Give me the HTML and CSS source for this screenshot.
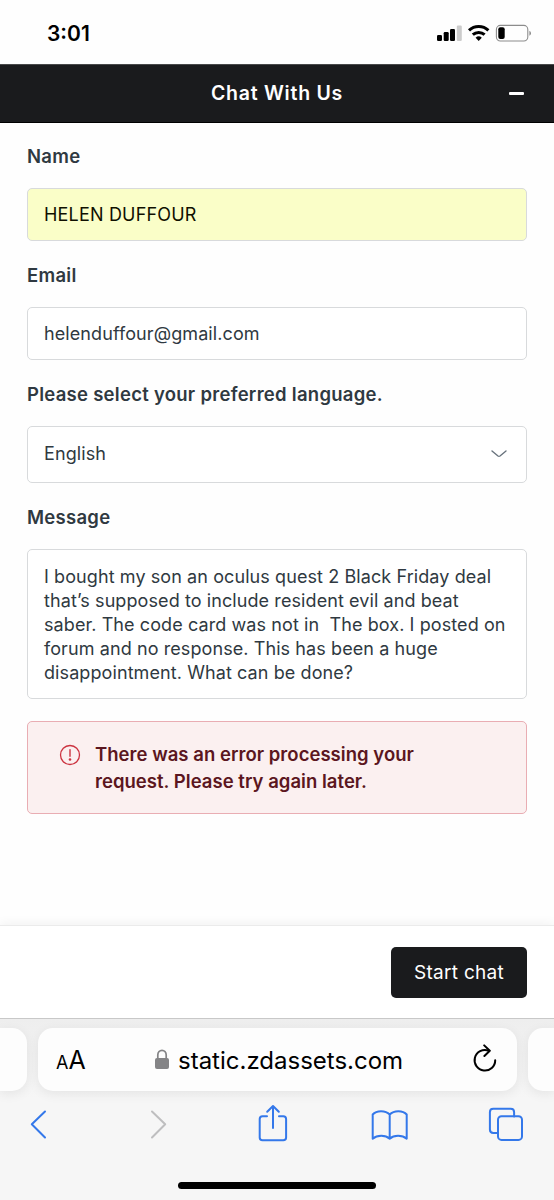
FILE: index.html
```html
<!DOCTYPE html>
<html lang="en">
<head>
<meta charset="utf-8">
<title>Chat With Us</title>
<link rel="stylesheet" href="styles.css">
</head>
<body>
<div class="screen">
  <div class="status">
    <span class="time">3:01</span>
    <svg class="status-icons" width="96" height="20" viewBox="0 0 96 20">
      <rect x="1" y="11" width="5" height="6" rx="1.2"/>
      <rect x="7.7" y="8" width="5" height="9" rx="1.2"/>
      <rect x="14" y="5" width="5" height="12" rx="1.2"/>
      <rect x="20.8" y="1.5" width="5" height="15.5" rx="1.2" fill="#ccc"/>
      <g fill="none" stroke="#000" stroke-width="3">
        <path d="M33 6.4a14.2 14.2 0 0 1 19.4 0"/>
        <path d="M36.8 10.7a8.7 8.7 0 0 1 11.8 0"/>
      </g>
      <path d="M39.6 13.7a4.6 4.6 0 0 1 6.2 0L42.7 17z"/>
      <rect x="60.4" y="1.4" width="31.4" height="15.6" rx="4" fill="none" stroke="#8c8c8c" stroke-width="1.1"/>
      <rect x="62.3" y="3.3" width="6.4" height="11.8" rx="2"/>
      <path d="M93.4 6.8q1.6 .7 1.6 2.5t-1.6 2.5z" fill="#8c8c8c"/>
    </svg>
  </div>
  <header class="header">
    <h1 class="title">Chat With Us</h1>
    <span class="minimize"></span>
  </header>
  <main class="form">
    <label class="label">Name</label>
    <div class="input autofilled"><span>HELEN DUFFOUR</span></div>
    <label class="label">Email</label>
    <div class="input"><span>helenduffour@gmail.com</span></div>
    <label class="label">Please select your preferred language.</label>
    <div class="input select"><span>English</span>
      <svg width="16" height="8" viewBox="0 0 16 8" fill="none" stroke="#68737d" stroke-width="1.4" stroke-linecap="round"><path d="M1 1l6 5q1 .7 2 0l6-5"/></svg>
    </div>
    <label class="label">Message</label>
    <div class="textarea">I bought my son an oculus quest 2 Black Friday deal
that’s supposed to include resident evil and beat
saber. The code card was not in  The box. I posted on
forum and no response. This has been a huge
disappointment. What can be done?</div>
    <div class="alert">
      <svg class="alert-icon" width="22" height="22" viewBox="0 0 22 22"><circle cx="11" cy="11" r="9.5" fill="none" stroke="#cc3340" stroke-width="1.3"/><path d="M11 5.8v6.5" stroke="#cc3340" stroke-width="1.4" stroke-linecap="round"/><circle cx="11" cy="15.5" r="1.3" fill="#cc3340"/></svg>
      <p class="alert-text">There was an error processing your<br>request. Please try again later.</p>
    </div>
  </main>
  <footer class="footer"><button class="start">Start chat</button></footer>
  <section class="browser">
    <div class="tabs">
      <div class="tab tab-prev"></div>
      <div class="tab tab-current">
        <span class="reader"><span class="small-a">A</span><span class="big-a">A</span></span>
        <span class="address">
          <svg width="16" height="21" viewBox="0 0 16 21"><rect x="1" y="9" width="14" height="11" rx="2" fill="#848486"/><path d="M3.8 10V6a4.2 4.7 0 0 1 8.4 0v4" fill="none" stroke="#848486" stroke-width="1.7"/></svg>
          <span class="host">static.zdassets.com</span>
        </span>
        <svg class="reload" width="26" height="30" viewBox="0 0 26 30" fill="none" stroke="#000" stroke-width="2" stroke-linecap="round" stroke-linejoin="round"><path d="M23.2 16.2A10.3 10.3 0 1 1 16.6 6.7"/><path d="M12.2 1.4l5.6 5.4-5.4 5.2"/></svg>
      </div>
      <div class="tab tab-next"></div>
    </div>
    <svg class="toolbar" width="554" height="44" viewBox="0 0 554 44" fill="none" stroke="#3478ea" stroke-width="2" stroke-linecap="round" stroke-linejoin="round">
      <path d="M45 9.5L31.8 22.3 45 35.5"/>
      <path d="M152 9.5l13.2 12.8L152 35.5" stroke="#bebebf"/>
      <path d="M267 14.2h-4.5q-2.8 0-2.8 2.8v18.5q0 2.8 2.8 2.8h20.8q2.8 0 2.8-2.8V17q0-2.8-2.8-2.8H279M273 26V4.2M267.2 9.8l5.8-5.8 5.8 5.8"/>
      <path d="M389.7 12.5C385.5 8 376.5 8 372.7 12.5v24.2c4.5-3.8 12.8-3.8 17 0 4.2-3.8 12.5-3.8 17 0V12.5C402.9 8 393.9 8 389.7 12.5v24.2"/>
      <path d="M497.5 31h-4.2q-3.4 0-3.4-3.4V10.2q0-3.4 3.4-3.4h17.4q3.4 0 3.4 3.4v4.2"/>
      <rect x="498" y="14.3" width="24" height="23.6" rx="3.5"/>
    </svg>
    <div class="home"></div>
  </section>
</div>
</body>
</html>
```
FILE: styles.css
```css
* { box-sizing: border-box; }
body { margin: 0; background: #fff; font-family: Inter, "Liberation Sans", sans-serif; color: #2f3941; }
.screen { width: 554px; height: 1200px; display: flex; flex-direction: column; overflow: hidden; background: #fefefe; }
.status { height: 64px; flex: none; display: flex; justify-content: space-between; padding: 20px 22px 0 47px; }
.time { color: #000; font-size: 21px; line-height: 27px; font-weight: 600; }
.status-icons { margin-top: 4px; }
.header { height: 59px; flex: none; display: grid; grid-template-columns: 1fr auto 1fr; align-items: center; background: #1a1b1d; border-top: 1px solid #48494a; border-bottom: 1px solid #000; padding: 0 30px; }
.title { grid-column: 2; margin: 0 0 1px; color: #fff; font-size: 19.5px; line-height: 26px; font-weight: 600; letter-spacing: .75px; }
.minimize { justify-self: end; width: 15px; height: 3px; border-radius: 1px; background: #fff; }
.form { flex: 1; display: flex; flex-direction: column; padding: 21px 27px 0; font-size: 18px; letter-spacing: .09px; }
.label { height: 24px; line-height: 25px; margin-bottom: 20px; font-size: 18.5px; font-weight: 600; letter-spacing: .27px; white-space: nowrap; }
.input { height: 53px; display: flex; align-items: center; flex: none; margin-bottom: 22px; padding: 0 19px 0 16px; border: 1.5px solid #d8dadc; border-radius: 5px; background: #fff; line-height: 24px; }
.autofilled { background: #fafec8; color: #101000; letter-spacing: .18px; }
.select { height: 57px; justify-content: space-between; padding-bottom: 2px; }
.textarea { height: 150px; flex: none; margin-bottom: 22px; padding: 15px 0 0 16px; border: 1.5px solid #d8dadc; border-radius: 5px; background: #fff; line-height: 24px; white-space: pre; }
.alert { height: 93px; flex: none; display: flex; padding: 19px 31px; border: 1.5px solid #e9adb3; border-radius: 5px; background: #fbf0f0; color: #5b1620; }
.alert-icon { margin: 3px 14px 0 0; }
.alert-text { margin: 0; font-size: 18.5px; line-height: 27px; font-weight: 600; letter-spacing: .03px; white-space: nowrap; }
.footer { height: 93px; flex: none; display: flex; justify-content: flex-end; align-items: flex-start; padding: 21px 27px 0; border-top: 1px solid #ebebeb; background: #fff; box-shadow: 0 -2px 10px rgba(0,0,0,.05); }
.start { width: 136px; height: 51px; padding: 0; border: 0; border-radius: 5px; background: #1a1b1d; color: #fff; font-family: inherit; font-size: 19px; letter-spacing: .3px; }
.browser { height: 182px; flex: none; background: #f6f6f6; border-top: 1px solid #c8c8c8; overflow: hidden; }
.tabs { height: 80px; display: flex; gap: 11px; padding-top: 9px; background: linear-gradient(#eee, #f6f6f6); }
.tab { height: 63px; flex: none; background: #fdfdfd; border-radius: 15px; box-shadow: 0 3px 12px rgba(0,0,0,.07); }
.tab-prev { width: 27px; border-radius: 0 15px 15px 0; }
.tab-current { width: 479px; display: flex; align-items: center; padding: 0 18px; color: #000; }
.tab-next { width: 26px; border-radius: 15px 0 0 15px; }
.reader { display: flex; align-items: baseline; width: 98px; padding-top: 1px; }
.small-a { font-size: 18px; }
.big-a { font-size: 25px; }
.address { display: flex; align-items: center; gap: 8px; }
.host { font-size: 24px; padding-top: 2px; }
.reload { margin: 0 1px 2px auto; }
.toolbar { display: block; margin-top: 3px; }
.home { width: 198px; height: 7px; margin: 36px auto 0; border-radius: 4px; background: #000; }
```
